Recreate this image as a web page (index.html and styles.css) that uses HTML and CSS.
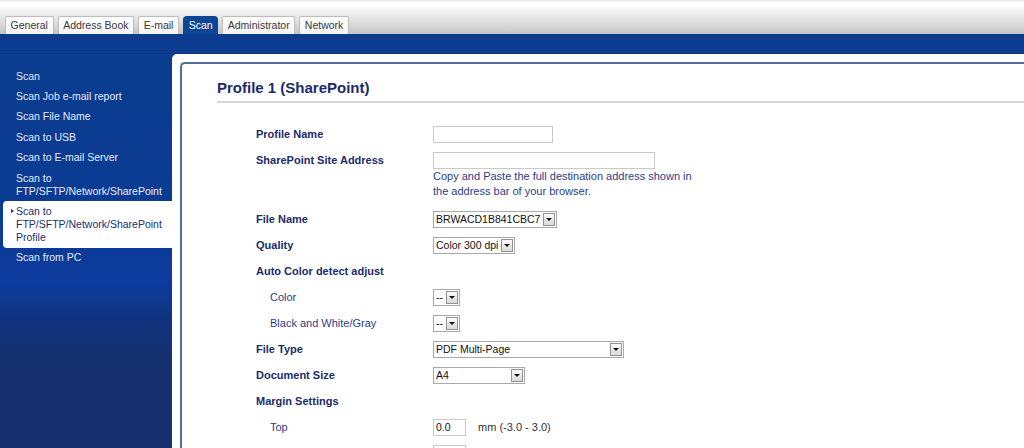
FILE: index.html
```html
<!DOCTYPE html>
<html lang="en">
<head>
<meta charset="utf-8">
<title>Scan - Profile 1 (SharePoint)</title>
<link rel="stylesheet" href="styles.css">
</head>
<body>
<header class="header">
  <nav class="tabs">
    <a class="tab">General</a>
    <a class="tab">Address Book</a>
    <a class="tab">E-mail</a>
    <a class="tab active">Scan</a>
    <a class="tab">Administrator</a>
    <a class="tab">Network</a>
  </nav>
</header>
<div class="main">
  <div class="band"></div>
  <div class="body">
    <nav class="sidebar">
      <a class="item">Scan</a>
      <a class="item">Scan Job e-mail report</a>
      <a class="item">Scan File Name</a>
      <a class="item">Scan to USB</a>
      <a class="item">Scan to E-mail Server</a>
      <a class="item">Scan to FTP/SFTP/Network/SharePoint</a>
      <a class="item selected">Scan to FTP/SFTP/Network/SharePoint Profile</a>
      <a class="item">Scan from PC</a>
    </nav>
    <section class="content">
      <div class="panel">
        <h1 class="title">Profile 1 (SharePoint)</h1>
        <div class="form">
          <div class="row">
            <div class="label">Profile Name</div>
            <div class="value"><div class="input w-name"></div></div>
          </div>
          <div class="row">
            <div class="label">SharePoint Site Address</div>
            <div class="value">
              <div class="input w-site"></div>
              <p class="help">Copy and Paste the full destination address shown in the address bar of your browser.</p>
            </div>
          </div>
          <div class="row">
            <div class="label">File Name</div>
            <div class="value"><div class="select"><span class="sel-text">BRWACD1B841CBC7</span><span class="sel-btn"><span class="tri"></span></span></div></div>
          </div>
          <div class="row">
            <div class="label">Quality</div>
            <div class="value"><div class="select"><span class="sel-text">Color 300 dpi</span><span class="sel-btn"><span class="tri"></span></span></div></div>
          </div>
          <div class="row">
            <div class="label">Auto Color detect adjust</div>
            <div class="value"></div>
          </div>
          <div class="row">
            <div class="label sub">Color</div>
            <div class="value"><div class="select"><span class="sel-text">--</span><span class="sel-btn"><span class="tri"></span></span></div></div>
          </div>
          <div class="row">
            <div class="label sub">Black and White/Gray</div>
            <div class="value"><div class="select"><span class="sel-text">--</span><span class="sel-btn"><span class="tri"></span></span></div></div>
          </div>
          <div class="row">
            <div class="label">File Type</div>
            <div class="value"><div class="select w-type"><span class="sel-text">PDF Multi-Page</span><span class="sel-btn"><span class="tri"></span></span></div></div>
          </div>
          <div class="row">
            <div class="label">Document Size</div>
            <div class="value"><div class="select w-size"><span class="sel-text">A4</span><span class="sel-btn"><span class="tri"></span></span></div></div>
          </div>
          <div class="row">
            <div class="label">Margin Settings</div>
            <div class="value"></div>
          </div>
          <div class="row">
            <div class="label sub">Top</div>
            <div class="value inline"><div class="input w-num">0.0</div><span class="unit">mm (-3.0 - 3.0)</span></div>
          </div>
          <div class="row">
            <div class="label sub">Bottom</div>
            <div class="value inline"><div class="input w-num">0.0</div><span class="unit">mm (-3.0 - 3.0)</span></div>
          </div>
        </div>
      </div>
    </section>
  </div>
</div>
</body>
</html>
```
FILE: styles.css
```css
html, body {
  margin: 0;
  padding: 0;
  overflow: hidden;
  height: 448px;
}
body {
  font-family: "Liberation Sans", Arial, sans-serif;
  font-size: 11px;
  background: #0b3c8f;
}
a { text-decoration: none; cursor: pointer; }

/* header with tabs */
.header {
  height: 34px;
  background: linear-gradient(#e9e9e9 0, #ffffff 3px, #fbfbfb 7px, #dedede 22px, #c5c5c5 34px);
}
.tabs {
  display: flex;
  align-items: flex-end;
  gap: 4px;
  height: 34px;
  padding-left: 5px;
  box-sizing: border-box;
}
.tab {
  height: 17px;
  line-height: 17px;
  padding: 0 4.6px;
  border: 1px solid #bdbdbd;
  border-bottom: none;
  border-radius: 2px 2px 0 0;
  background: linear-gradient(#ffffff, #f3f3f3);
  color: #3a3a3a;
  font-size: 10.5px;
}
.tab.active {
  background: #0d4596;
  border-color: #0d4596;
  border-radius: 4px 4px 0 0;
  color: #ffffff;
}

/* blue area */
.main {
  background: #0b3c8f;
}
.band {
  height: 19px;
  border-bottom: 1px solid #0a3576;
}
.body {
  display: flex;
  height: 394px;
}
.sidebar {
  width: 172px;
  flex: none;
  padding-top: 12px;
  box-sizing: border-box;
  display: flex;
  flex-direction: column;
  background: linear-gradient(#0a3c8f 0%, #0b3c94 40%, #0c3b9e 58%, #12337c 68%, #15306d 78%, #15306c 100%);
}
.item {
  position: relative;
  padding: 3.7px 8px 3.7px 16px;
  line-height: 13px;
  font-size: 10.5px;
  color: #e4eaf7;
}
.item.selected {
  margin-left: 3px;
  padding-left: 13px;
  background: #ffffff;
  border-radius: 4px 0 0 4px;
  color: #1b2d72;
}
.item.selected::before {
  content: "";
  position: absolute;
  left: 8px;
  top: 8px;
  border-left: 3px solid #1b2d72;
  border-top: 2.5px solid transparent;
  border-bottom: 2.5px solid transparent;
}

/* content */
.content {
  flex: 1;
  background: #ffffff;
  border-top-left-radius: 5px;
  padding: 8px 0 0 8px;
  margin-right: -20px;
}
.panel {
  height: 100%;
  border: 2px solid #4f6f96;
  border-right: none;
  border-bottom: none;
  border-top-left-radius: 5px;
  padding: 15px 0 0 35px;
  box-sizing: border-box;
}
.title {
  margin: 0;
  font-size: 15px;
  line-height: 18px;
  font-weight: bold;
  color: #1a2a6c;
  padding-bottom: 4px;
  border-bottom: 2px solid #d6d6d6;
}
.form {
  margin-top: 19px;
  padding-left: 39px;
}
.row {
  display: flex;
  align-items: flex-start;
  padding: 4.47px 0;
}
.label {
  width: 177px;
  flex: none;
  box-sizing: border-box;
  line-height: 17px;
  font-weight: bold;
  color: #1b2b6d;
}
.label.sub {
  padding-left: 14px;
  font-weight: normal;
  color: #2e4085;
}
.value {
  min-height: 17px;
}
.value.inline {
  display: flex;
  align-items: center;
}
.input {
  height: 17px;
  box-sizing: border-box;
  border: 1px solid #c9c9c9;
  background: #ffffff;
  font-size: 10.5px;
  line-height: 15px;
  padding-left: 2px;
  color: #111;
}
.w-name { width: 120px; }
.w-site { width: 222px; }
.w-num { width: 33px; }
.unit {
  margin-left: 12px;
  color: #333;
  font-size: 11px;
}
.help {
  margin: 0 0 3px;
  max-width: 265px;
  line-height: 15px;
  color: #2b3d88;
}
.select {
  display: inline-flex;
  align-items: center;
  height: 17px;
  box-sizing: border-box;
  border: 1px solid #a9a9a9;
  background: #ffffff;
  padding-left: 2px;
  gap: 2px;
  font-size: 10.5px;
  color: #111;
  vertical-align: top;
}
.sel-text {
  flex: 1;
  line-height: 15px;
  white-space: nowrap;
  padding-right: 1px;
}
.w-type { width: 191px; }
.w-size { width: 92px; }
.sel-btn {
  width: 12px;
  height: 13px;
  margin-right: 1px;
  box-sizing: border-box;
  border: 1px solid #929292;
  background: linear-gradient(#fbfbfb, #d9d9d9);
  display: flex;
  align-items: center;
  justify-content: center;
}
.tri {
  width: 0;
  height: 0;
  border-top: 3px solid #111;
  border-left: 3px solid transparent;
  border-right: 3px solid transparent;
}
```
